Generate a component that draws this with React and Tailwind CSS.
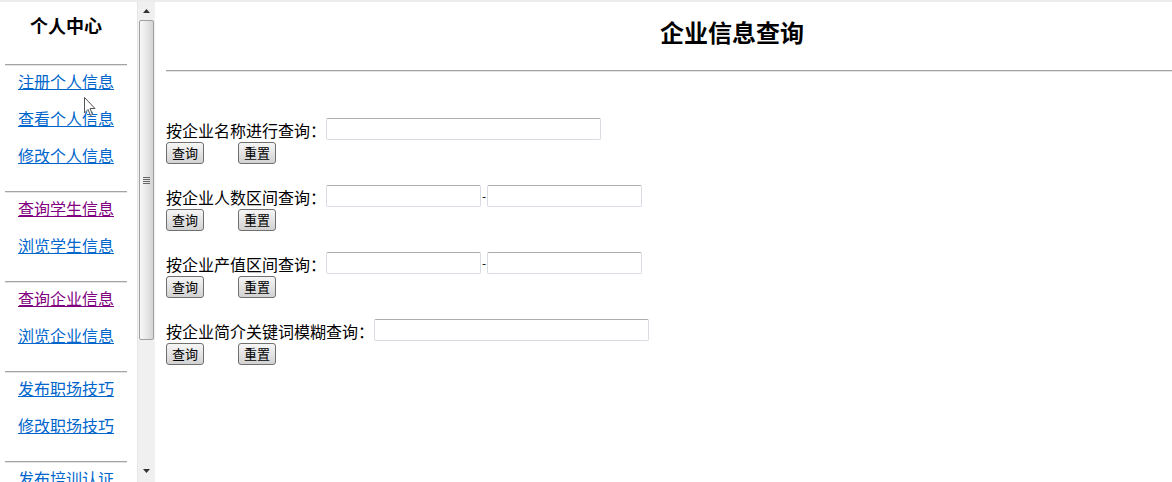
import React from "react";

const GROUPS = [
  [
    { text: "注册个人信息" },
    { text: "查看个人信息" },
    { text: "修改个人信息" },
  ],
  [
    { text: "查询学生信息", visited: true },
    { text: "浏览学生信息" },
  ],
  [
    { text: "查询企业信息", visited: true },
    { text: "浏览企业信息" },
  ],
  [{ text: "发布职场技巧" }, { text: "修改职场技巧" }],
  [{ text: "发布培训认证" }],
];

const QUERIES = [
  { label: "按企业名称进行查询：", range: false },
  { label: "按企业人数区间查询：", range: true },
  { label: "按企业产值区间查询：", range: true },
  { label: "按企业简介关键词模糊查询：", range: false },
];

const font = "font-['Noto_Sans_CJK_SC','Noto_Sans',sans-serif]";

function Scrollbar() {
  return (
    <div className="w-[18px] shrink-0 h-full bg-[#f0f0f0] border-l border-[#e6e6e6] flex flex-col items-center">
      <div className="h-[18px] w-full flex items-center justify-center">
        <svg width="7" height="4" viewBox="0 0 7 4">
          <path d="M3.5 0 L7 4 L0 4 Z" fill="#333" />
        </svg>
      </div>
      <div className="w-[15px] h-[320px] rounded-[2px] border border-[#a0a0a0] bg-gradient-to-r from-[#f7f7f7] via-[#e8e8e8] to-[#d4d4d4] flex items-center justify-center">
        <div className="flex flex-col gap-[1px]">
          <div className="w-[7px] h-[1px] bg-[#666]" />
          <div className="w-[7px] h-[1px] bg-[#666]" />
          <div className="w-[7px] h-[1px] bg-[#666]" />
          <div className="w-[7px] h-[1px] bg-[#666]" />
        </div>
      </div>
      <div className="flex-1" />
      <div className="h-[22px] w-full flex items-center justify-center">
        <svg width="7" height="4" viewBox="0 0 7 4">
          <path d="M0 0 L7 0 L3.5 4 Z" fill="#333" />
        </svg>
      </div>
    </div>
  );
}

function Hr() {
  return <div className="h-[2px] border-t border-[#a4a4a4] border-b-[1px] border-b-[#e4e4e4]" />;
}

function Sidebar() {
  return (
    <div className="w-[155px] shrink-0 h-full flex overflow-hidden relative">
      <div className="w-[137px] shrink-0 pt-[13px] pl-[5px] pr-[10px]">
        <h3 className="text-center text-[18px] leading-[20px] font-bold text-black">个人中心</h3>
        <div className="mt-[29px]">
          {GROUPS.map((g, i) => (
            <div key={i} className="mb-[14px]">
              <Hr />
              {g.map((l) => (
                <a
                  key={l.text}
                  href="#"
                  className={`block h-[37px] pt-[6px] pl-[13px] text-[16px] leading-[18px] underline whitespace-nowrap ${
                    l.visited ? "text-[#800080]" : "text-[#0066cc]"
                  }`}
                >
                  {l.text}
                </a>
              ))}
            </div>
          ))}
        </div>
      </div>
      <Scrollbar />
      <svg
        className="absolute left-[84px] top-[95px]"
        width="12"
        height="20"
        viewBox="0 0 12 20"
      >
        <path
          d="M0.5 0.5 L0.5 16 L4 12.5 L6.5 18.5 L8.5 17.5 L6 11.5 L11 11.5 Z"
          fill="#fff"
          stroke="#555"
          strokeWidth="1"
        />
      </svg>
    </div>
  );
}

function Btn({ children }) {
  return (
    <button className="h-[22px] px-[5px] text-[13px] leading-[16px] text-black border border-[#707070] rounded-[3px] bg-gradient-to-b from-[#f6f6f6] to-[#d2d2d2]">
      {children}
    </button>
  );
}

function Input({ w }) {
  return (
    <input
      type="text"
      className={`${w} h-[22px] border border-[#d9dce2] border-t-[#adadad] rounded-[2px] bg-white outline-none`}
    />
  );
}

export default function App() {
  return (
    <div className={`w-[1172px] h-[482px] bg-white flex flex-col overflow-hidden ${font}`}>
      <div className="h-[2px] bg-[#ececec] shrink-0" />
      <div className="flex flex-1 min-h-0">
        <Sidebar />
        <div className="flex-1 min-w-0 overflow-hidden pl-[11px] pt-[16px]">
          <div className="w-[1132px]">
            <h1 className="text-center text-[24px] leading-[28px] font-bold text-black">企业信息查询</h1>
            <div className="mt-[24px]">
              <Hr />
            </div>
            <div className="mt-[46px] flex flex-col gap-[21px]">
              {QUERIES.map((q) => (
                <div key={q.label} className="flex flex-col gap-[2px]">
                  <div className="flex items-center h-[22px] text-[16px] text-black">
                    <span className="leading-[22px] pt-[1px]">{q.label}</span>
                    {q.range ? (
                      <>
                        <Input w="w-[155px]" />
                        <span className="w-[6px] text-center text-[12px]">-</span>
                        <Input w="w-[155px]" />
                      </>
                    ) : (
                      <Input w="w-[275px]" />
                    )}
                  </div>
                  <div className="flex gap-[34px] h-[22px]">
                    <Btn>查询</Btn>
                    <Btn>重置</Btn>
                  </div>
                </div>
              ))}
            </div>
          </div>
        </div>
      </div>
    </div>
  );
}
